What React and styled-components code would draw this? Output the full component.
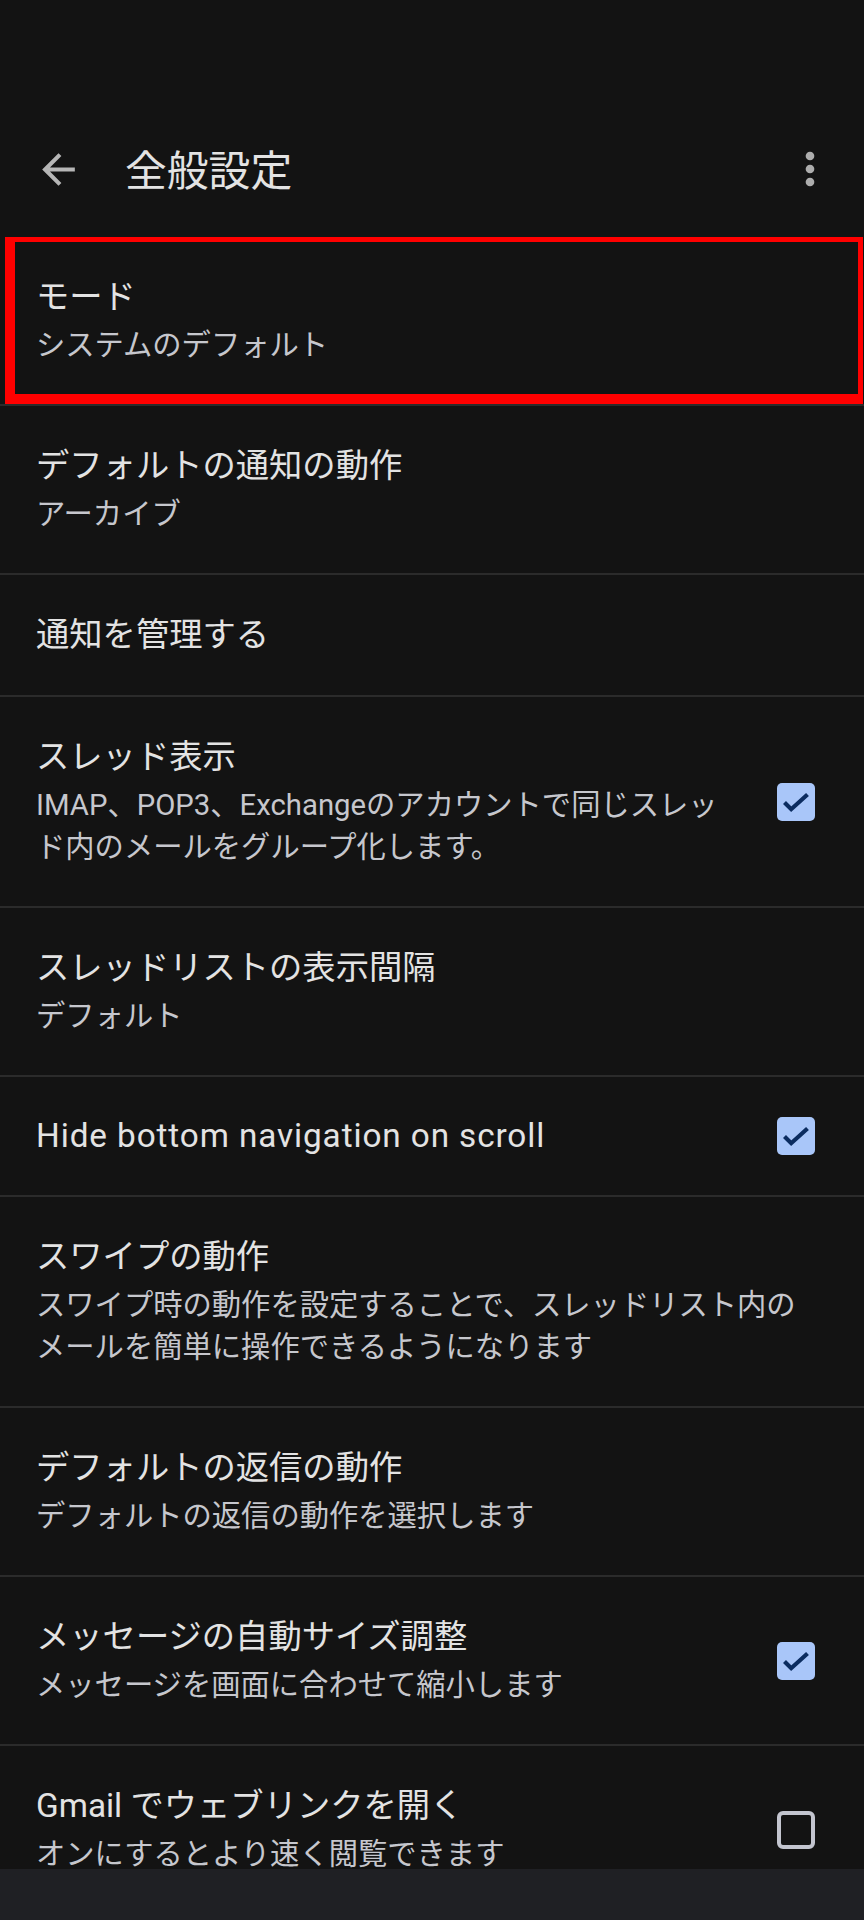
import React from 'react';
import styled, { createGlobalStyle } from 'styled-components';

const GlobalStyle = createGlobalStyle`
  html, body { margin: 0; padding: 0; background: #131313; }
  body {
    font-family: Roboto, "Noto Sans CJK JP", sans-serif;
    -webkit-font-smoothing: antialiased;
  }
`;

const Page = styled.div`
  width: 864px;
  height: 1920px;
  display: flex;
  flex-direction: column;
  overflow: hidden;
  background: #131313;
`;

const StatusBar = styled.div`
  height: 104px;
  flex-shrink: 0;
`;

const Toolbar = styled.header`
  height: 133px;
  flex-shrink: 0;
  display: flex;
  align-items: center;
  padding: 0 28px 3px 34px;
  box-sizing: border-box;
`;

const IconButton = styled.button`
  width: ${(p) => p.$size}px;
  height: ${(p) => p.$size}px;
  padding: 0;
  border: 0;
  background: none;
  display: flex;
  align-items: center;
  justify-content: center;
  color: ${(p) => p.$color};
  svg { width: 100%; height: 100%; display: block; }
`;

const Title = styled.h1`
  flex: 1;
  margin: 0 0 0 42px;
  font-family: "Noto Sans CJK JP", sans-serif;
  font-size: 41.8px;
  font-weight: 400;
  line-height: 1;
  color: #e3e3e3;
`;

const List = styled.main`
  flex: 1;
  overflow: hidden;
`;

const Row = styled.div`
  position: relative;
  display: flex;
  align-items: center;
  gap: 24px;
  padding: ${(p) => p.$pad ?? 38}px 49px ${(p) => p.$pad ?? 38}px 36px;
  border-bottom: 2px solid #2b2b2b;
`;

const Texts = styled.div`
  flex: 1;
  min-width: 0;
`;

const RowTitle = styled.div`
  font-size: 33.3px;
  line-height: 44px;
  color: #e3e3e3;
  white-space: nowrap;
  letter-spacing: ${(p) => (p.$latin ? '0.9px' : '0')};
`;

const RowSub = styled.div`
  margin-top: 5px;
  font-size: 29.3px;
  line-height: 42px;
  color: #c6c7cd;
  white-space: nowrap;
`;

const Highlight = styled.div`
  position: absolute;
  top: -5px;
  left: 5px;
  right: 1px;
  bottom: 0;
  border-style: solid;
  border-color: #ff0000;
  border-width: 10px 5px 10px 10px;
  pointer-events: none;
`;

const CheckBox = styled.svg`
  width: 38px;
  height: 38px;
  flex-shrink: 0;
  display: block;
`;

const NavBar = styled.div`
  height: 51px;
  flex-shrink: 0;
  background: #1f2024;
`;

const Checkbox = ({ checked }) => (
  <CheckBox viewBox="0 0 38 38">
    {checked ? (
      <>
        <rect x="0" y="0" width="38" height="38" rx="5" fill="#a9c6f9" />
        <polyline
          points="7.5,19.5 14.2,26.2 30.5,11.5"
          fill="none"
          stroke="#0b2c60"
          strokeWidth="4.2"
        />
      </>
    ) : (
      <rect x="2" y="2" width="34" height="34" rx="4" fill="none" stroke="#c3c5cf" strokeWidth="4" />
    )}
  </CheckBox>
);

const items = [
  { title: 'モード', sub: ['システムのデフォルト'], highlight: true },
  { title: 'デフォルトの通知の動作', sub: ['アーカイブ'] },
  { title: '通知を管理する' },
  {
    title: 'スレッド表示',
    sub: ['IMAP、POP3、Exchangeのアカウントで同じスレッ', 'ド内のメールをグループ化します。'],
    check: true,
  },
  { title: 'スレッドリストの表示間隔', sub: ['デフォルト'] },
  { title: 'Hide bottom navigation on scroll', check: true, pad: 37, latin: true },
  {
    title: 'スワイプの動作',
    sub: ['スワイプ時の動作を設定することで、スレッドリスト内の', 'メールを簡単に操作できるようになります'],
  },
  { title: 'デフォルトの返信の動作', sub: ['デフォルトの返信の動作を選択します'] },
  { title: 'メッセージの自動サイズ調整', sub: ['メッセージを画面に合わせて縮小します'], check: true },
  { title: 'Gmail でウェブリンクを開く', sub: ['オンにするとより速く閲覧できます'], check: false },
];

export default function App() {
  return (
    <>
      <GlobalStyle />
      <Page>
        <StatusBar />
        <Toolbar>
          <IconButton $size={49} $color="#b6b6b6" aria-label="戻る">
            <svg viewBox="0 0 24 24">
              <path fill="currentColor" d="M20 11H7.83l5.59-5.59L12 4l-8 8 8 8 1.41-1.41L7.83 13H20v-2z" />
            </svg>
          </IconButton>
          <Title>全般設定</Title>
          <IconButton $size={52} $color="#adadad" aria-label="その他">
            <svg viewBox="0 0 24 24">
              <circle cx="12" cy="6" r="2" fill="currentColor" />
              <circle cx="12" cy="12" r="2" fill="currentColor" />
              <circle cx="12" cy="18" r="2" fill="currentColor" />
            </svg>
          </IconButton>
        </Toolbar>
        <List>
          {items.map((it, i) => (
            <Row key={i} $pad={it.pad}>
              <Texts>
                <RowTitle $latin={it.latin}>{it.title}</RowTitle>
                {it.sub && (
                  <RowSub>
                    {it.sub.map((line, j) => (
                      <React.Fragment key={j}>
                        {j > 0 && <br />}
                        {line}
                      </React.Fragment>
                    ))}
                  </RowSub>
                )}
              </Texts>
              {it.check !== undefined && <Checkbox checked={it.check} />}
              {it.highlight && <Highlight />}
            </Row>
          ))}
        </List>
        <NavBar />
      </Page>
    </>
  );
}
